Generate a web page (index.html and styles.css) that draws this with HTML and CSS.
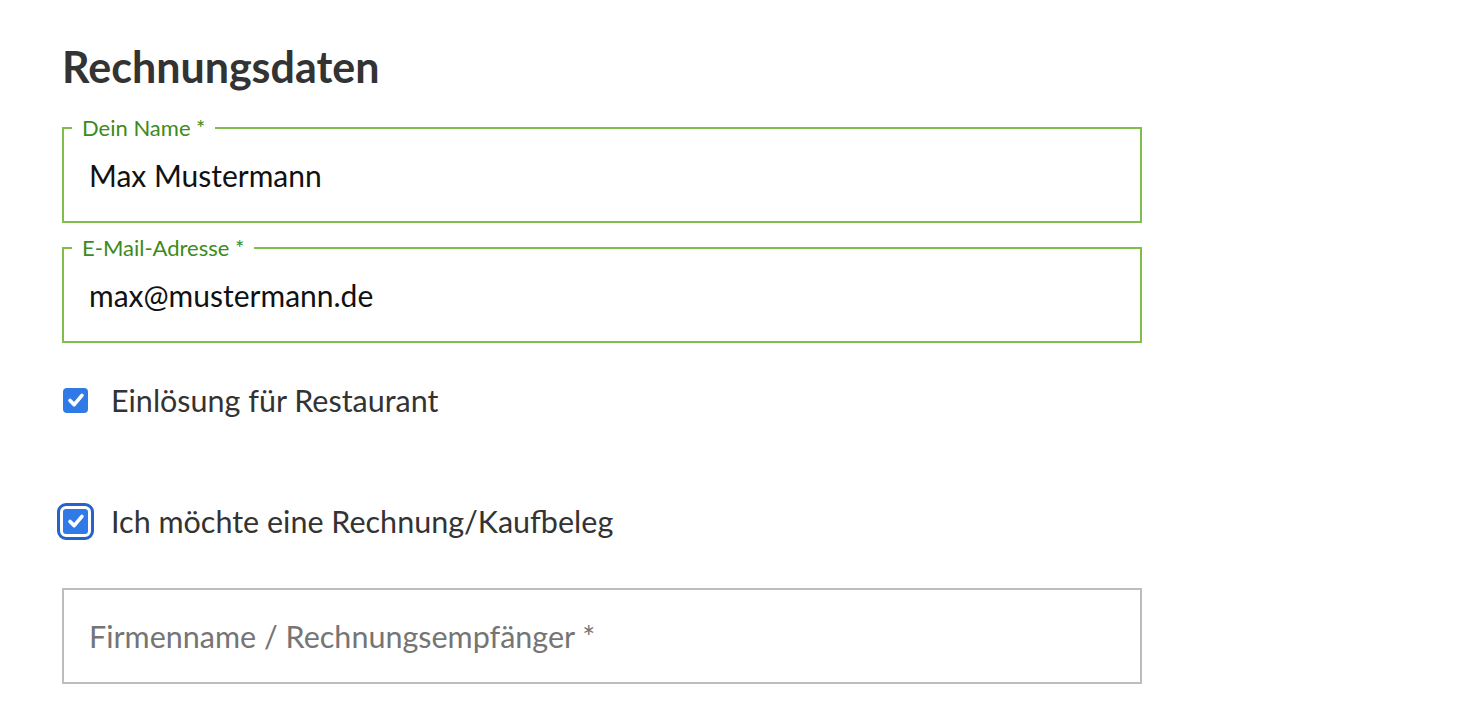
FILE: index.html
```html
<!DOCTYPE html>
<html lang="de">
<head>
<meta charset="utf-8">
<title>Rechnungsdaten</title>
<link rel="stylesheet" href="styles.css">
</head>
<body>
<main class="form">
  <h2 class="title">Rechnungsdaten</h2>
  <fieldset class="field field--valid">
    <legend class="field__legend">Dein Name *</legend>
    <input class="field__input" type="text" value="Max Mustermann">
  </fieldset>
  <fieldset class="field field--valid field--second">
    <legend class="field__legend">E-Mail-Adresse *</legend>
    <input class="field__input" type="email" value="max@mustermann.de">
  </fieldset>
  <label class="check check--first">
    <span class="check__box">
      <svg viewBox="0 0 24 24" width="22" height="22"><path d="M5.5 12.5 L10 17 L18.5 7" fill="none" stroke="#fff" stroke-width="4" stroke-linecap="round" stroke-linejoin="round"/></svg>
    </span>
    <span class="check__label">Einlösung für Restaurant</span>
  </label>
  <label class="check check--second">
    <span class="check__box check__box--focus">
      <svg viewBox="0 0 24 24" width="22" height="22"><path d="M5.5 12.5 L10 17 L18.5 7" fill="none" stroke="#fff" stroke-width="4" stroke-linecap="round" stroke-linejoin="round"/></svg>
    </span>
    <span class="check__label">Ich möchte eine Rechnung/Kaufbeleg</span>
  </label>
  <div class="plain">
    <input class="plain__input" type="text" placeholder="Firmenname / Rechnungsempfänger *">
  </div>
</main>
</body>
</html>
```
FILE: styles.css
```css
* { box-sizing: border-box; }
html, body { margin: 0; padding: 0; background: #fff; }
body { font-family: Lato, "Noto Sans", sans-serif; color: #333; }

.form {
  display: flex;
  flex-direction: column;
  align-items: flex-start;
  width: 1080px;
  margin-left: 62px;
  padding-top: 41px;
}

.title {
  margin: 0;
  font-size: 43px;
  line-height: 51px;
  font-weight: 700;
  color: #333;
}

.field {
  width: 1080px;
  margin: 24px 0 0 0;
  padding: 0 0 0 8px;
  border: 2px solid #80bd4c;
  min-width: 0;
}
.field--second { margin-top: 13px; }

.field__legend {
  padding: 0 10px;
  font-size: 22px;
  line-height: 24px;
  color: #3d8a20;
}

.field__input {
  display: block;
  width: 100%;
  height: 70px;
  margin: 0 0 11px 0;
  padding: 0 0 0 17px;
  border: 0;
  outline: none;
  background: transparent;
  font-family: Lato, "Noto Sans", sans-serif;
  font-size: 30px;
  color: #111;
}

.check {
  display: flex;
  align-items: center;
  gap: 23px;
  height: 40px;
}
.check--first { margin-top: 37px; }
.check--second { margin-top: 81px; }

.check__box {
  width: 25px;
  height: 25px;
  margin-left: 1px;
  border-radius: 4px;
  background: #2f7ae6;
  display: flex;
  align-items: center;
  justify-content: center;
  flex: none;
}
.check__box--focus {
  outline: 3px solid #2563c9;
  outline-offset: 3px;
  border-radius: 3px;
}

.check__label {
  font-size: 30.5px;
  color: #333;
}

.plain {
  width: 1080px;
  height: 96px;
  margin-top: 47px;
  border: 2px solid #bdbdbd;
  display: flex;
  align-items: center;
}
.plain__input {
  width: 100%;
  height: 60px;
  padding: 0 0 0 25px;
  border: 0;
  outline: none;
  background: transparent;
  font-family: Lato, "Noto Sans", sans-serif;
  font-size: 30.5px;
  color: #111;
}
.plain__input::placeholder { color: #757575; opacity: 1; }
```
